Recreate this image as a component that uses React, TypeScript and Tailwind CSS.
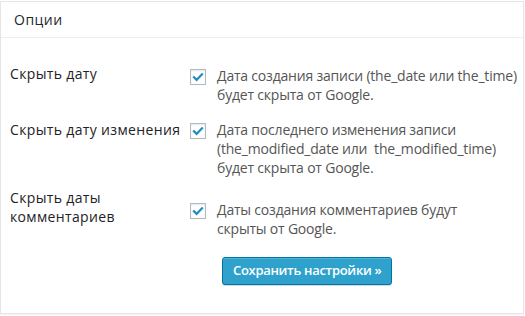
import React from "react";

type Row = {
  label: React.ReactNode;
  lines: string[];
  rowClass: string;
  descClass: string;
};

const rows: Row[] = [
  {
    label: "Скрыть дату",
    lines: ["Дата создания записи (the_date или the_time)", "будет скрыта от Google."],
    rowClass: "mt-[26px]",
    descClass: "mt-[2px]",
  },
  {
    label: "Скрыть дату изменения",
    lines: [
      "Дата последнего изменения записи",
      "(the_modified_date или\u00a0 the_modified_time)",
      "будет скрыта от Google.",
    ],
    rowClass: "mt-[16px]",
    descClass: "mt-0",
  },
  {
    label: (
      <>
        Скрыть даты
        <br />
        комментариев
      </>
    ),
    lines: ["Даты создания комментариев будут", "скрыты от Google."],
    rowClass: "mt-[11px]",
    descClass: "mt-[12px]",
  },
];

function Checkbox() {
  return (
    <span className="mt-[3px] flex h-4 w-4 shrink-0 items-center justify-center border border-[#b4b9be] bg-white shadow-[inset_0_1px_2px_rgba(0,0,0,0.1)]">
      <svg width="14" height="14" viewBox="0 0 14 14" fill="none">
        <path d="M3 7.3l2.6 2.6L11 4.3" stroke="#1e8cbe" strokeWidth="2.2" strokeLinecap="square" />
      </svg>
    </span>
  );
}

export default function App() {
  return (
    <div
      className="h-[316px] w-[525px] bg-white pt-px"
      style={{ fontFamily: '"Open Sans", "Noto Sans", sans-serif' }}
    >
      <div className="h-[313px] w-[524px] border border-[#e5e5e5] bg-white shadow-[0_1px_1px_rgba(0,0,0,0.04)]">
        <div className="flex h-[36px] items-center border-b border-[#eeeeee] px-[13px] text-[14px] tracking-[0.5px] text-[#23282d]">
          Опции
        </div>

        <div className="px-[9px]">
          {rows.map((r, i) => (
            <div key={i} className={"flex items-start " + r.rowClass}>
              <div className="w-[180px] shrink-0 text-[14px] leading-[19px] tracking-[0.35px] text-[#1d2327]">
                {r.label}
              </div>
              <div className={"flex items-start gap-[11px] " + r.descClass}>
                <Checkbox />
                <div className="text-[14px] leading-[19px] tracking-[-0.2px] whitespace-nowrap text-[#555555]">
                  {r.lines.map((l, j) => (
                    <div key={j}>{l}</div>
                  ))}
                </div>
              </div>
            </div>
          ))}

          <div className="mt-[19px] pl-[212px]">
            <button
              type="button"
              className="h-[28px] rounded-[3px] border border-[#0074a2] bg-[#2ea2cc] px-[10px] text-[13px] font-semibold tracking-[-0.3px] text-white shadow-[inset_0_1px_0_rgba(120,200,230,0.5),0_1px_0_rgba(0,0,0,0.15)]"
            >
              Сохранить настройки »
            </button>
          </div>
        </div>
      </div>
    </div>
  );
}
